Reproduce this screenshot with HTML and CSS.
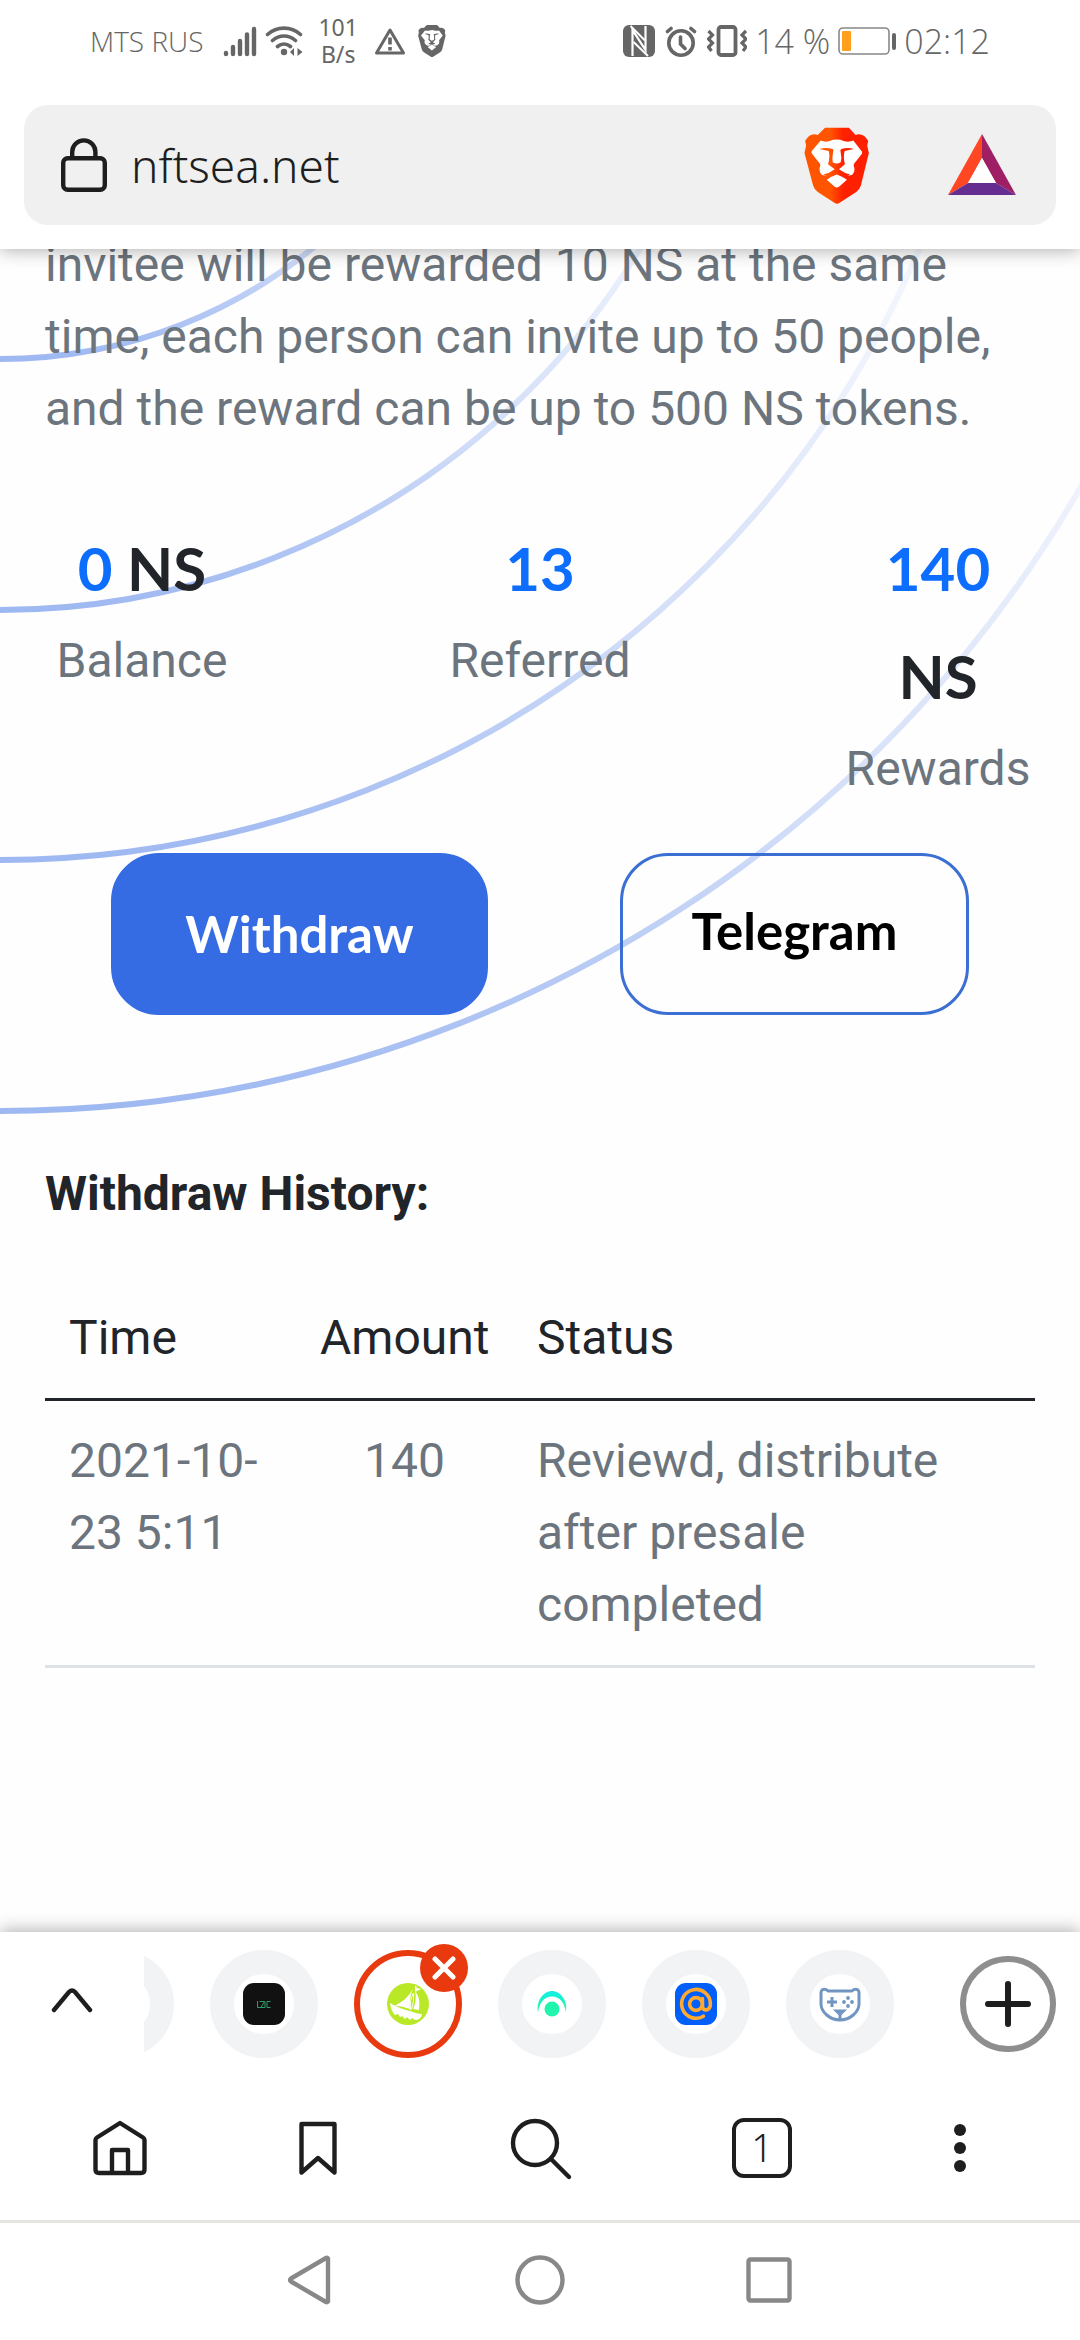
FILE: index.html
```html
<!DOCTYPE html>
<html lang="en">
<head>
    <meta charset="UTF-8" />
    <meta name="viewport" content="width=device-width, initial-scale=1.0" />
    <title>nftsea.net</title>
    <link rel="stylesheet" href="styles.css">
</head>
<body>

<header class="top">
    <div class="status-bar">
        <span class="carrier">MTS RUS</span>
        <svg class="signal" width="34" height="32" viewBox="0 0 34 32" stroke="#666" stroke-width="4.4" stroke-linecap="round">
            <path d="M3 29v-1M10 29v-7M17 29V16M24 29V9.500M31 29V4" />
        </svg>
        <svg class="wifi" width="38" height="32" viewBox="0 0 38 32" fill="none" stroke="#666" stroke-width="3.600" stroke-linecap="round">
            <path d="M2.500 9.500C12 1 26 1 35.500 9.500M7.500 15.500c7-6 16-6 23 0M12.500 21.500c4-3.300 9-3.300 13 0" />
            <circle cx="19" cy="27" r="3.200" fill="#666" stroke="none" />
            <path d="M25 27l4-4v8zM37.500 27l-5-4v8z" fill="#666" stroke="none" />
        </svg>
        <span class="speed">101<br>B/s</span>
        <svg class="warning" width="32" height="28" viewBox="0 0 32 28" fill="none" stroke="#666" stroke-width="3">
            <path d="M16 3L2.500 26h27z" stroke-linejoin="round" />
            <path d="M16 10.500v7M16 20v3.500" stroke-width="3.600" />
        </svg>
        <svg class="lion-small" width="28" height="34" viewBox="312 108 198 232">
            <path fill="#666" d="M375 110h72l20 22c14-5 28 0 38 18l-3 14 5 22-24 98q-4 12-14 20l-50 32q-8 6-16 0l-50-32q-10-8-14-20l-26-98 5-22-3-14c10-18 24-23 38-18z" />
            <path fill="#fff" d="M362 149q14 6 32 1 17-8 34 0 18 5 32-1l27 36-26 34q4 12-1 24-20 26-50 6-30 20-49-6-6-12-1-24l-27-34z" />
            <path fill="#666" d="M358 172q20-4 40 4-6 22-2 38l14 8 15-8q4-16-2-38 20-8 40-4l-30 12v20l2 12-18 16 18 12q-25 12-50 0l18-12-18-16 2-12v-20z" />
            <path fill="#fff" d="M399 184h24q-2 18 2 30l-14 6-15-6q4-14 3-30zM380 267l30-16 31 16-31 24z" />
        </svg>
        <div class="status-right">
            <svg width="32" height="32" viewBox="0 0 32 32">
                <rect width="32" height="32" rx="6" fill="#666" />
                <path d="M9.500 31V5L22.500 25V1" fill="none" stroke="#fff" stroke-width="2.200" />
                <path d="M7.500 1L22 15.500M10.500 17L25 31" fill="none" stroke="#fff" stroke-width="2" />
            </svg>
            <svg class="alarm" width="32" height="32" viewBox="0 0 32 32" fill="none" stroke="#666" stroke-width="3.600" stroke-linecap="round">
                <circle cx="16" cy="18" r="12.200" />
                <path d="M15.500 12v7l4.500 4.500M2.500 6.500L6 3.500M29.500 6.500L26 3.500" />
            </svg>
            <svg class="vibrate" width="40" height="32" viewBox="0 0 40 32" fill="none" stroke="#666" stroke-width="3.800">
                <rect x="11.500" y="2" width="17" height="28" rx="2.500" />
                <path d="M1.500 6l4 4-4 4 4 4-4 4 3 4M39 6l-4 4 4 4-4 4 4 4-3 4" stroke-width="3.200" />
            </svg>
            <span class="big">14 %</span>
            <svg class="battery" width="58" height="28" viewBox="0 0 58 28">
                <rect x="1" y="1" width="50" height="26" rx="4" fill="none" stroke="#888" stroke-width="1.600" />
                <rect x="4" y="4" width="9" height="20" rx="1" fill="#ff9f1c" />
                <rect x="54" y="6" width="4" height="17" rx="2" fill="#666" />
            </svg>
            <span class="big">02:12</span>
        </div>
    </div>

    <div class="url-bar">
        <svg width="46" height="54" viewBox="0 0 46 54" fill="none" stroke="#1e1e1e" stroke-width="4.400">
            <rect x="2.200" y="20.200" width="41.600" height="31.600" rx="4.500" />
            <path d="M11.200 20V14a11.600 11.600 0 0 1 23.200 0v6" />
        </svg>
        <input class="url" type="text" value="nftsea.net" aria-label="Address">
        <button class="icon-btn shields" aria-label="Shields">
            <svg width="66" height="77" viewBox="312 108 198 232">
                <defs>
                    <linearGradient id="lion" gradientUnits="userSpaceOnUse" x1="313" x2="508" y1="0" y2="0">
                        <stop offset="0.400" stop-color="#ff5500" />
                        <stop offset="0.600" stop-color="#ff2000" />
                    </linearGradient>
                </defs>
                <path fill="url(#lion)" d="M375 110h72l20 22c14-5 28 0 38 18l-3 14 5 22-24 98q-4 12-14 20l-50 32q-8 6-16 0l-50-32q-10-8-14-20l-26-98 5-22-3-14c10-18 24-23 38-18z" />
                <path fill="#fff" d="M362 149q14 6 27 1 21-8 42 0 15 5 29-1l26 33q2 5-1 8l-22 28q-4 5 0 12 3 12-6 22-18 8-46-16-28 24-46 16-9-10-6-22 4-7 0-12l-22-28q-5-5-2-10z" />
                <path fill="url(#lion)" d="M358 174q20-6 40 0 4 3 1 10-3 17-1 30 12 8 24 0 4-13 0-30-3-8 2-10 20-6 38 0l-28 6q-5 18 1 40l-18 15q16 12 34 16-20 10-41-3-21 13-41 3 20-4 35-16l-20-15q7-22 2-40z" />
                <path fill="#fff" d="M380 267q15-11 30-16 15 5 31 16l-24 21q-7 5-13 0z" />
            </svg>
        </button>
        <button class="icon-btn rewards-btn" aria-label="Brave Rewards">
            <svg width="68" height="62" viewBox="0 0 68 62">
                <path fill="#ff4724" d="M34 0v24L20 49 0 61z" />
                <path fill="#9e1f63" d="M34 0v24l14 25 20 12z" />
                <path fill="#662d91" d="M0 61l20-12h28l20 12z" />
                <path fill="#fff" d="M34 24L20 49h28z" />
            </svg>
        </button>
    </div>
</header>

<main class="page">
    <!-- faded rings behind the content -->
    <svg class="rings" width="1260" height="880" viewBox="0 0 1260 880" fill="none" stroke="url(#fade)" stroke-width="6">
        <defs>
            <linearGradient id="fade" x1="0" x2="0" y1="0" y2="1">
                <stop offset="0.640" stop-color="#366ce3" stop-opacity="0.030" />
                <stop offset="0.750" stop-color="#366ce3" stop-opacity="0.080" />
                <stop offset="0.885" stop-color="#366ce3" stop-opacity="0.220" />
                <stop offset="1" stop-color="#366ce3" stop-opacity="0.480" />
            </linearGradient>
        </defs>
        <circle cx="0" cy="-386" r="496" />
        <circle cx="0" cy="-386" r="747" />
        <circle cx="0" cy="-386" r="997" />
        <circle cx="0" cy="-386" r="1248" />
    </svg>

    <p class="intro">invitee will be rewarded 10 NS at the same time, each person can invite up to 50 people, and the reward can be up to 500 NS tokens.</p>

    <div class="stats">
        <div class="stat">
            <h3><span>0</span> NS</h3>
            <p>Balance</p>
        </div>
        <div class="stat">
            <h3><span>13</span></h3>
            <p>Referred</p>
        </div>
        <div class="stat">
            <h3><span>140</span> NS</h3>
            <p>Rewards</p>
        </div>
    </div>

    <div class="actions">
        <button class="btn btn-primary">Withdraw</button>
        <a class="btn btn-outline" href="#">Telegram</a>
    </div>

    <h4 class="history-title">Withdraw History:</h4>
    <table class="history">
        <thead>
            <tr>
                <th class="time">Time</th>
                <th class="amount">Amount</th>
                <th>Status</th>
            </tr>
        </thead>
        <tbody>
            <tr>
                <td>2021-10-23 5:11</td>
                <td class="amount">140</td>
                <td>Reviewd, distribute after presale completed</td>
            </tr>
        </tbody>
    </table>
</main>

<footer class="bottom">
    <div class="tabs">
        <button class="icon-btn expand" aria-label="Expand tabs">
            <svg width="42" height="26" viewBox="0 0 42 26" fill="none" stroke="#1e1e1e" stroke-width="4.400" stroke-linecap="round" stroke-linejoin="round">
                <path d="M3 23L18 5q3-3 6 0l15 18" />
            </svg>
        </button>
        <div class="tab-strip">
            <button class="tab" aria-label="Tab"></button>
            <button class="tab" aria-label="Tab">
                <svg width="42" height="42" viewBox="0 0 42 42">
                    <rect width="42" height="42" rx="11" fill="#111" />
                    <path d="M14.500 18v6.500H18M16.500 18.500h5l-3.500 6h4M22 18.500v6M27.500 18.500H24v6h3.500" fill="none" stroke="#2a9d6b" />
                </svg>
            </button>
            <div class="tab-active">
                <button class="tab tab-current" aria-label="Current tab">
                    <svg width="42" height="42" viewBox="0 0 42 42">
                        <circle cx="21" cy="21" r="21" fill="#b8e826" />
                        <path fill="#fff" d="M3 20q8 5 20 8 7 3 12 3-1 6-7 6l-3-2-2 2-3-3-2 2-3-3-2 1-2-3-3 1q-4-4-5-12z" />
                        <path fill="#fff" d="M8 22.500Q20 17 26 6q-4 9-3 20-8-3-15-3.500zM28 8q6 7 4 19l-6-1q4-8 2-18zM28 3h1.500v2l4.500 1-6 3z" />
                        <path d="M23.500 27q-1-10 3-17 1 9-2 16" fill="none" stroke="#fff" />
                    </svg>
                </button>
                <button class="close" aria-label="Close tab">
                    <svg width="24" height="24" viewBox="0 0 24 24" stroke="#fff" stroke-width="5" stroke-linecap="round">
                        <path d="M3 3l18 18M21 3L3 21" />
                    </svg>
                </button>
            </div>
            <button class="tab" aria-label="Tab">
                <svg width="42" height="42" viewBox="0 0 42 42">
                    <defs>
                        <linearGradient id="eye" x1="0" x2="0" y1="0" y2="1">
                            <stop offset="0" stop-color="#12f0e8" />
                            <stop offset="1" stop-color="#22f89a" />
                        </linearGradient>
                    </defs>
                    <path fill="url(#eye)" d="M7 29C5 17 13 8 21 8s16 9 14 21C33 18 28 13.500 21 13.500S9 18 7 29z" />
                    <circle cx="21" cy="26" r="7.500" fill="#1ff5ac" />
                </svg>
            </button>
            <button class="tab" aria-label="Tab">
                <svg width="42" height="42" viewBox="0 0 42 42">
                    <rect width="42" height="42" rx="11" fill="#005ff9" />
                    <g fill="none" stroke="#ffa930" stroke-width="3.600" stroke-linecap="round">
                        <circle cx="21" cy="21" r="6.400" />
                        <path d="M27.400 15.500V23q0 4 4 4 4-1 4-6a14.400 14.400 0 1 0-7 12.200" />
                    </g>
                </svg>
            </button>
            <button class="tab" aria-label="Tab">
                <svg width="42" height="42" viewBox="0 0 42 42" fill="none" stroke="#7096c1" stroke-width="3">
                    <path d="M9 8h24q3-3 6-1 1 1 1 3v11c0 8-9 16-19 16S2 29 2 21V10q0-2 1-3 3-2 6 1z" stroke-linejoin="round" />
                    <path d="M13 14v10M8 19h10M21 36v-5" />
                    <path d="M17.500 28h7L21 31.500z" fill="#7096c1" />
                    <g fill="#7096c1" stroke="none">
                        <circle cx="29" cy="15" r="1.900" />
                        <circle cx="29" cy="23" r="1.900" />
                        <circle cx="25" cy="19" r="1.900" />
                        <circle cx="33" cy="19" r="1.900" />
                    </g>
                </svg>
            </button>
        </div>
        <button class="new-tab" aria-label="New tab">
            <svg width="46" height="46" viewBox="0 0 46 46" stroke="#1e1e1e" stroke-width="6" stroke-linecap="round">
                <path d="M23 3v40M3 23h40" />
            </svg>
        </button>
    </div>

    <div class="toolbar">
        <button class="icon-btn tool" aria-label="Home">
            <svg width="60" height="60" viewBox="0 0 60 60" fill="none" stroke="#1e1e1e" stroke-width="4.400" stroke-linejoin="round">
                <path d="M5.500 22Q5.500 20.500 7 19.500L30 5l23 14.500q1.500 1 1.500 2.500v29.500q0 3.500-3.500 3.500H9q-3.500 0-3.500-3.500z" />
                <path d="M22 55V32h16v23" />
            </svg>
        </button>
        <button class="icon-btn tool" aria-label="Bookmarks">
            <svg width="60" height="60" viewBox="0 0 60 60" fill="none" stroke="#1e1e1e" stroke-width="4.400" stroke-linejoin="round">
                <path d="M13.500 6h33v48.500L30 40 13.500 54.500z" />
            </svg>
        </button>
        <button class="icon-btn tool search" aria-label="Search">
            <svg width="66" height="66" viewBox="0 0 66 66" fill="none" stroke="#1e1e1e" stroke-width="4.400" stroke-linecap="round">
                <circle cx="28" cy="28" r="22" />
                <path d="M44 44l18 18" />
            </svg>
        </button>
        <button class="icon-btn tool" aria-label="Open tabs"><span class="tab-count">1</span></button>
        <button class="icon-btn tool" aria-label="Menu">
            <svg width="12" height="48" viewBox="0 0 12 48" fill="#1e1e1e">
                <circle cx="6" cy="6" r="6" />
                <circle cx="6" cy="24" r="6" />
                <circle cx="6" cy="42" r="6" />
            </svg>
        </button>
    </div>

    <div class="nav">
        <button class="icon-btn" aria-label="Back">
            <svg width="50" height="50" viewBox="0 0 50 50" fill="none" stroke="#888" stroke-width="4.400" stroke-linejoin="round">
                <path d="M42 3.500v43q-1 1-2 .500L5 26.500q-2-1.500 0-3L40 3q1-.500 2 .500z" />
            </svg>
        </button>
        <button class="icon-btn" aria-label="Home screen">
            <svg width="50" height="50" viewBox="0 0 50 50" fill="none" stroke="#888" stroke-width="4.400">
                <circle cx="25" cy="25" r="22.500" />
            </svg>
        </button>
        <button class="icon-btn" aria-label="Recent apps">
            <svg width="50" height="50" viewBox="0 0 50 50" fill="none" stroke="#888" stroke-width="4.400">
                <rect x="4.500" y="4.500" width="41" height="41" rx="2" />
            </svg>
        </button>
    </div>
</footer>

</body>
</html>
```
FILE: styles.css
```css
* {
    margin: 0;
    padding: 0;
    box-sizing: border-box;
}
body {
    min-height: 100vh;
    display: flex;
    flex-direction: column;
    background-color: #fefefe;
    color: #212529;
    font-family: Roboto, sans-serif;
    font-size: 48px;
    line-height: 72px;
}
button {
    border: none;
    background: none;
    font: inherit;
    cursor: pointer;
}
svg {
    display: block;
    flex-shrink: 0;
}
.icon-btn {
    display: flex;
    align-items: center;
    justify-content: center;
}

/* status bar and address bar */
.top {
    position: relative;
    z-index: 2;
    padding: 0 24px 24px;
    background-color: #fff;
    box-shadow: 0 2px 16px rgba(0, 0, 0, 0.3);
}
.status-bar {
    height: 81px;
    margin-bottom: 24px;
    padding: 0 66px;
    display: flex;
    align-items: center;
    color: #666;
    font-family: "Open Sans", "Noto Sans", sans-serif;
    font-weight: 300;
}
.carrier {
    font-size: 28px;
}
.signal {
    margin-left: 20px;
}
.wifi {
    margin-left: 8px;
}
.speed {
    margin: 0 16px 0 15px;
    font-family: "Noto Sans", sans-serif;
    font-weight: 400;
    font-size: 23px;
    line-height: 27px;
    text-align: center;
}
.lion-small {
    margin-left: 12px;
}
.status-right {
    margin-left: auto;
    display: flex;
    align-items: center;
}
.alarm {
    margin: 0 10px;
}
.vibrate {
    margin-right: 8px;
}
.battery {
    margin: 0 8px;
}
.big {
    font-size: 34px;
}
.url-bar {
    height: 120px;
    padding: 0 40px 0 37px;
    display: flex;
    align-items: center;
    border-radius: 24px;
    background-color: #f0f0f0;
}
.url {
    flex: 1;
    min-width: 0;
    margin-left: 24px;
    border: none;
    outline: none;
    background: none;
    color: #1e1e1e;
    font-family: "Noto Sans", sans-serif;
    font-weight: 300;
    font-size: 46px;
}
.rewards-btn {
    margin-left: 78px;
}

/* page content */
.page {
    position: relative;
    flex: 1;
    padding: 0 45px;
    overflow: hidden;
}
.rings {
    position: absolute;
    top: 0;
    left: 0;
    z-index: -1;
}
.intro {
    margin-top: -20px;
    color: #6c757d;
}
.stats {
    margin-top: 69px;
    display: flex;
    justify-content: space-between;
    text-align: center;
}
.stat {
    width: 194px;
    padding: 0 4px;
}
.stat h3 {
    margin-bottom: 3px;
    font-family: Lato, sans-serif;
    font-size: 60px;
    line-height: 108px;
}
.stat h3 span {
    color: #0d6efd;
}
.stat p {
    color: #6c757d;
}
.actions {
    margin-top: 48px;
    display: flex;
    justify-content: space-around;
}
.btn {
    height: 162px;
    display: flex;
    align-items: center;
    justify-content: center;
    border: 3px solid #3b6fd4;
    border-radius: 48px;
    font-family: Lato, sans-serif;
    font-size: 51px;
    font-weight: 700;
    text-decoration: none;
}
.btn-primary {
    width: 377px;
    border-color: #366ce3;
    background-color: #366ce3;
    color: #fff;
}
.btn-outline {
    width: 349px;
    padding-bottom: 6px;
    color: #000;
}
.history-title {
    margin: 143px 0 48px;
    font-size: 48px;
}
.history {
    width: 100%;
    border-collapse: collapse;
    table-layout: fixed;
}
.history th,
.history td {
    padding: 24px;
    border-bottom: 3px solid #dee2e6;
    text-align: left;
    vertical-align: top;
}
.history th {
    border-bottom-color: #212529;
    font-weight: 400;
}
.history td {
    color: #6c757d;
}
.history .time {
    width: 251px;
}
.history .amount {
    width: 217px;
    text-align: center;
}

/* bottom bars */
.bottom {
    position: relative;
    z-index: 2;
    background-color: #fff;
    box-shadow: 0 -2px 16px rgba(0, 0, 0, 0.3);
}
.tabs {
    height: 144px;
    padding-right: 24px;
    display: flex;
    align-items: center;
}
.expand {
    width: 144px;
    height: 100%;
    padding-bottom: 8px;
}
.tab-strip {
    flex: 1;
    min-width: 0;
    height: 100%;
    display: flex;
    align-items: center;
    gap: 36px;
    overflow: hidden;
}
.tab {
    flex-shrink: 0;
    width: 108px;
    height: 108px;
    display: flex;
    align-items: center;
    justify-content: center;
    border: 24px solid #f1f3f5;
    border-radius: 50%;
    background-color: #fff;
}
/* the strip is scrolled past its first tab */
.tab:first-child {
    margin-left: -78px;
}
.tab-active {
    position: relative;
}
.tab-active .tab-current {
    margin-left: 0;
    border: 6px solid #e83a0e;
}
.close {
    position: absolute;
    top: -6px;
    right: -6px;
    width: 48px;
    height: 48px;
    display: flex;
    align-items: center;
    justify-content: center;
    border-radius: 50%;
    background-color: #e83a0e;
}
.new-tab {
    width: 96px;
    height: 96px;
    display: flex;
    align-items: center;
    justify-content: center;
    border: 6px solid #8e8e8e;
    border-radius: 50%;
}
.toolbar {
    height: 147px;
    padding: 0 60px;
    display: flex;
    justify-content: space-between;
    border-bottom: 3px solid #e4e4e0;
}
.tool {
    width: 120px;
    height: 100%;
}
.search {
    width: 168px;
}
.tab-count {
    width: 60px;
    height: 60px;
    border: 4px solid #1e1e1e;
    border-radius: 12px;
    color: #1e1e1e;
    font-family: "Noto Sans", sans-serif;
    font-size: 38px;
    font-weight: 300;
    line-height: 50px;
}
.nav {
    height: 117px;
    padding-bottom: 3px;
    display: flex;
    align-items: center;
    justify-content: center;
    gap: 133px;
}
.nav .icon-btn {
    width: 96px;
    height: 96px;
}
```
